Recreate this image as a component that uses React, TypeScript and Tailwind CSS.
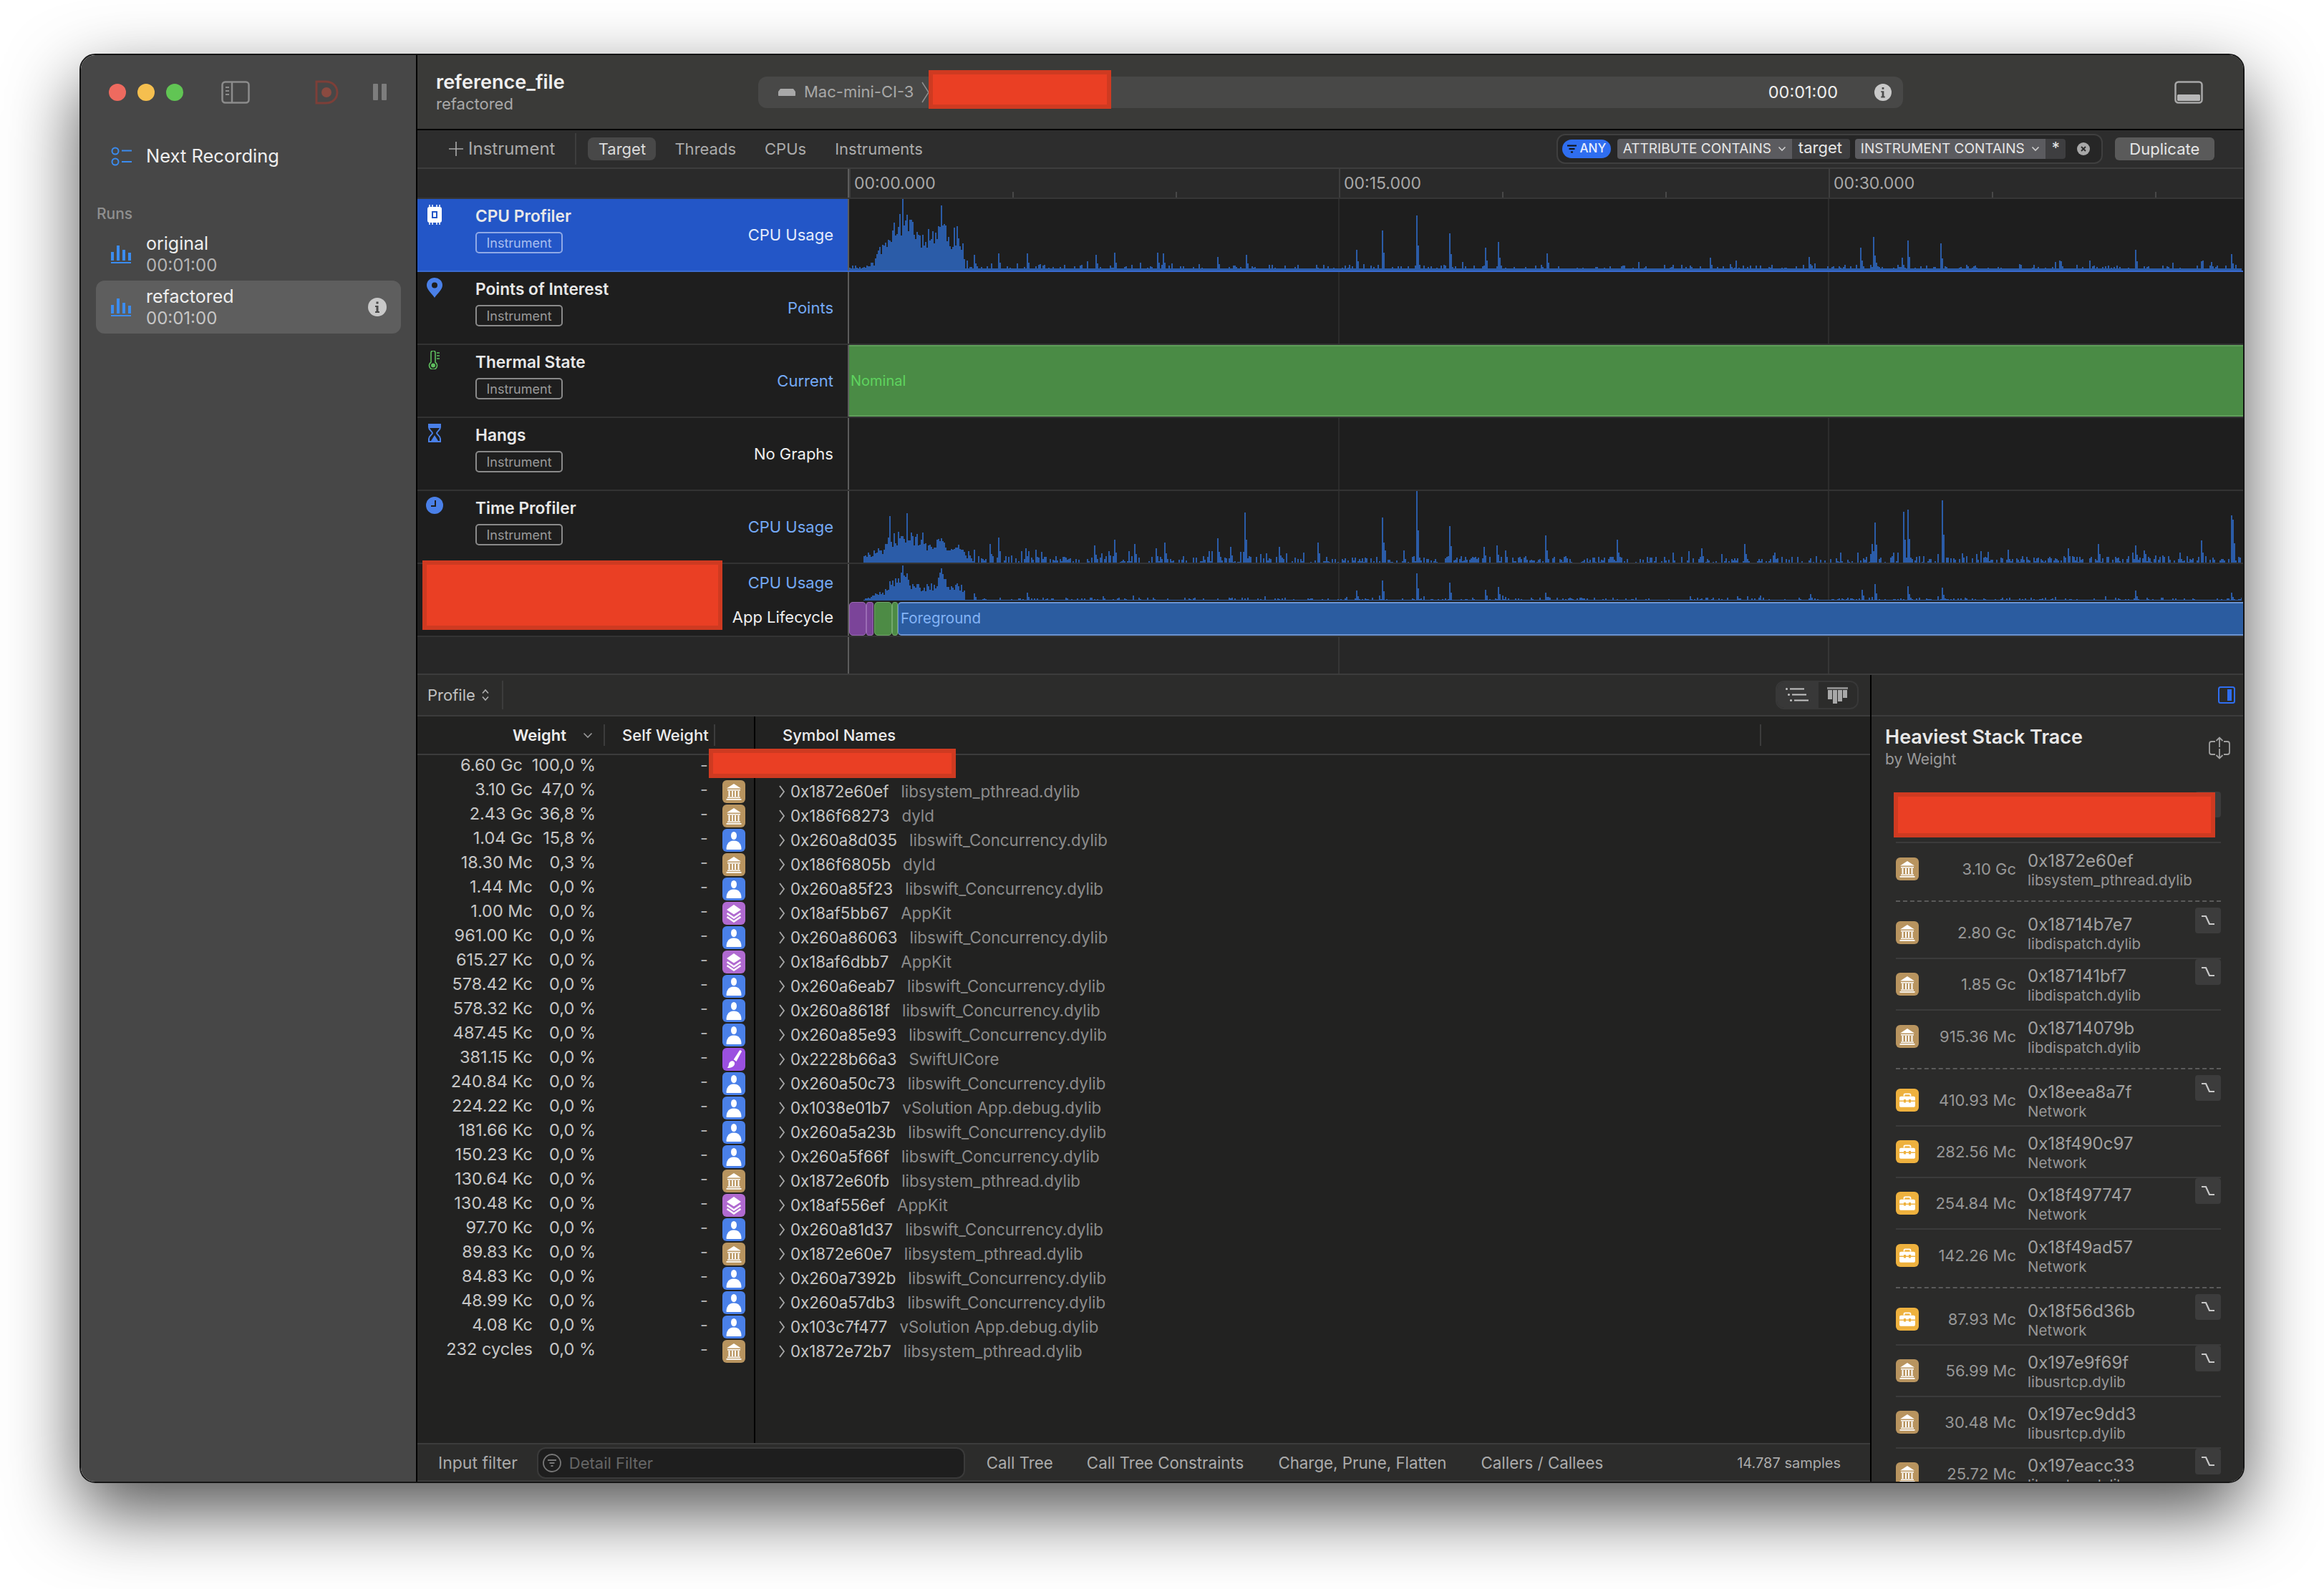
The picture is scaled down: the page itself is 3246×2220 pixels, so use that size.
import React from 'react';

type SymbolKind = 'lib' | 'user' | 'layers' | 'brush' | 'tool';

const CALL_ROWS: [string, string, SymbolKind | null, string, string][] = [
  ['6.60 Gc', '100,0 %', null, '', ''],
  ['3.10 Gc', '47,0 %', 'lib', '0x1872e60ef', 'libsystem_pthread.dylib'],
  ['2.43 Gc', '36,8 %', 'lib', '0x186f68273', 'dyld'],
  ['1.04 Gc', '15,8 %', 'user', '0x260a8d035', 'libswift_Concurrency.dylib'],
  ['18.30 Mc', '0,3 %', 'lib', '0x186f6805b', 'dyld'],
  ['1.44 Mc', '0,0 %', 'user', '0x260a85f23', 'libswift_Concurrency.dylib'],
  ['1.00 Mc', '0,0 %', 'layers', '0x18af5bb67', 'AppKit'],
  ['961.00 Kc', '0,0 %', 'user', '0x260a86063', 'libswift_Concurrency.dylib'],
  ['615.27 Kc', '0,0 %', 'layers', '0x18af6dbb7', 'AppKit'],
  ['578.42 Kc', '0,0 %', 'user', '0x260a6eab7', 'libswift_Concurrency.dylib'],
  ['578.32 Kc', '0,0 %', 'user', '0x260a8618f', 'libswift_Concurrency.dylib'],
  ['487.45 Kc', '0,0 %', 'user', '0x260a85e93', 'libswift_Concurrency.dylib'],
  ['381.15 Kc', '0,0 %', 'brush', '0x2228b66a3', 'SwiftUICore'],
  ['240.84 Kc', '0,0 %', 'user', '0x260a50c73', 'libswift_Concurrency.dylib'],
  ['224.22 Kc', '0,0 %', 'user', '0x1038e01b7', 'vSolution App.debug.dylib'],
  ['181.66 Kc', '0,0 %', 'user', '0x260a5a23b', 'libswift_Concurrency.dylib'],
  ['150.23 Kc', '0,0 %', 'user', '0x260a5f66f', 'libswift_Concurrency.dylib'],
  ['130.64 Kc', '0,0 %', 'lib', '0x1872e60fb', 'libsystem_pthread.dylib'],
  ['130.48 Kc', '0,0 %', 'layers', '0x18af556ef', 'AppKit'],
  ['97.70 Kc', '0,0 %', 'user', '0x260a81d37', 'libswift_Concurrency.dylib'],
  ['89.83 Kc', '0,0 %', 'lib', '0x1872e60e7', 'libsystem_pthread.dylib'],
  ['84.83 Kc', '0,0 %', 'user', '0x260a7392b', 'libswift_Concurrency.dylib'],
  ['48.99 Kc', '0,0 %', 'user', '0x260a57db3', 'libswift_Concurrency.dylib'],
  ['4.08 Kc', '0,0 %', 'user', '0x103c7f477', 'vSolution App.debug.dylib'],
  ['232 cycles', '0,0 %', 'lib', '0x1872e72b7', 'libsystem_pthread.dylib'],
];

type StackRow = { kind: SymbolKind; value: string; sym: string; lib: string; jump?: boolean };

// dashed line between groups
const STACK_GROUPS: StackRow[][] = [
  [{ kind: 'lib', value: '3.10 Gc', sym: '0x1872e60ef', lib: 'libsystem_pthread.dylib' }],
  [
    { kind: 'lib', value: '2.80 Gc', sym: '0x18714b7e7', lib: 'libdispatch.dylib', jump: true },
    { kind: 'lib', value: '1.85 Gc', sym: '0x187141bf7', lib: 'libdispatch.dylib', jump: true },
    { kind: 'lib', value: '915.36 Mc', sym: '0x18714079b', lib: 'libdispatch.dylib' },
  ],
  [
    { kind: 'tool', value: '410.93 Mc', sym: '0x18eea8a7f', lib: 'Network', jump: true },
    { kind: 'tool', value: '282.56 Mc', sym: '0x18f490c97', lib: 'Network' },
    { kind: 'tool', value: '254.84 Mc', sym: '0x18f497747', lib: 'Network', jump: true },
    { kind: 'tool', value: '142.26 Mc', sym: '0x18f49ad57', lib: 'Network' },
  ],
  [
    { kind: 'tool', value: '87.93 Mc', sym: '0x18f56d36b', lib: 'Network', jump: true },
    { kind: 'lib', value: '56.99 Mc', sym: '0x197e9f69f', lib: 'libusrtcp.dylib', jump: true },
    { kind: 'lib', value: '30.48 Mc', sym: '0x197ec9dd3', lib: 'libusrtcp.dylib' },
    { kind: 'lib', value: '25.72 Mc', sym: '0x197eacc33', lib: 'libusrtcp.dylib', jump: true },
  ],
];

type Pt = [number, number];

function rng(seed: number) {
  let s = seed;
  return () => {
    s = (s * 1664525 + 1013904223) % 4294967296;
    return s / 4294967296;
  };
}

function envelope(env: Pt[], x: number) {
  if (env.length === 0 || x < env[0][0] || x > env[env.length - 1][0]) return 0;
  for (let i = 1; i < env.length; i++) {
    if (x <= env[i][0]) {
      const t = (x - env[i - 1][0]) / (env[i][0] - env[i - 1][0]);
      return env[i - 1][1] + (env[i][1] - env[i - 1][1]) * t;
    }
  }
  return 0;
}

function barsPath(opts: { seed: number; start: number; base: number; p1: number; a1: number; p2: number; a2: number; env: Pt[]; spikes: Pt[]; height: number }) {
  const r = rng(opts.seed);
  const hs = new Map<number, number>();
  for (let x = opts.start; x < 3133; x += 2) {
    let h = opts.base;
    const v = r();
    if (v < opts.p2) h += r() * opts.a2;
    else if (v < opts.p1) h += r() * opts.a1;
    const e = envelope(opts.env, x);
    if (e > 0) h = Math.max(h, e * (0.5 + 0.5 * r()));
    hs.set(x, h);
  }
  for (const [x, h] of opts.spikes) {
    const k = x - ((x - opts.start) % 2);
    hs.set(k, h);
    hs.set(k + 2, Math.max(hs.get(k + 2) ?? 0, h * 0.45));
  }
  let d = '';
  hs.forEach((h, x) => {
    if (h >= 1) d += `M${x} ${opts.height}v${-Math.round(h)}h2v${Math.round(h)}z`;
  });
  return d;
}

const CPU_PROFILER_BARS = barsPath({
  seed: 11, start: 1188, base: 3, p1: 0.32, a1: 5, p2: 0.05, a2: 11, height: 100,
  env: [[1204, 4], [1222, 14], [1236, 50], [1246, 70], [1262, 100], [1272, 75], [1288, 58], [1304, 62], [1316, 91], [1328, 52], [1340, 70], [1348, 30], [1350, 4]],
  spikes: [[1262, 100], [1316, 91], [1363, 22], [1396, 24], [1437, 24], [1532, 22], [1559, 25], [1618, 25], [1626, 24], [1702, 19], [1742, 22], [1896, 29], [1933, 56], [1981, 77], [2026, 52], [2076, 32], [2095, 40], [2162, 24], [2391, 18], [2529, 19], [2601, 32], [2619, 47], [2667, 42], [2659, 18], [2713, 38], [2985, 29], [3076, 13], [3118, 23]],
});

const TIME_PROFILER_BARS = barsPath({
  seed: 29, start: 1208, base: 0, p1: 0.62, a1: 9, p2: 0.1, a2: 18, height: 100,
  env: [[1207, 10], [1214, 14], [1236, 25], [1245, 42], [1268, 50], [1285, 34], [1300, 30], [1316, 36], [1325, 20], [1340, 26], [1350, 16], [1351, 0]],
  spikes: [[1245, 65], [1268, 69], [1275, 42], [1283, 40], [1291, 42], [1397, 35], [1385, 26], [1434, 20], [1449, 18], [1530, 24], [1559, 32], [1586, 26], [1628, 28], [1617, 20], [1702, 34], [1721, 22], [1741, 70], [1788, 22], [1843, 28], [1933, 63], [1981, 100], [2027, 51], [2075, 22], [2092, 24], [2161, 38], [2260, 32], [2378, 20], [2438, 26], [2620, 56], [2617, 26], [2660, 71], [2667, 74], [2714, 87], [2891, 20], [2932, 26], [2985, 24], [3076, 31], [3119, 66], [3121, 60]],
});

const APP_BARS = barsPath({
  seed: 53, start: 1208, base: 1, p1: 0.35, a1: 3, p2: 0.05, a2: 6, height: 51,
  env: [[1207, 2], [1220, 8], [1236, 16], [1245, 32], [1262, 49], [1275, 28], [1290, 24], [1305, 26], [1316, 45], [1328, 20], [1340, 28], [1349, 16], [1350, 0]],
  spikes: [[1262, 49], [1316, 45], [1362, 10], [1437, 11], [1896, 14], [1933, 28], [1981, 38], [2027, 25], [2076, 15], [2095, 19], [2161, 11], [2530, 9], [2603, 15], [2620, 23], [2667, 20], [2714, 18], [2985, 14], [3119, 11]],
});

function LaneGraph({ d, height = 100, tall = false }: { d?: string; height?: number; tall?: boolean }) {
  return (
    <svg className="block" width="1945" height={height} viewBox={`1188 0 1945 ${height}`} shapeRendering="crispEdges">
      <path d={`M1871 0h2v${height}h-2zM2555 0h2v${height}h-2z`} fill={tall ? '#363636' : '#2c2c2c'} />
      {d && <path d={d} fill="#2b5ca8" />}
    </svg>
  );
}

function SymbolIcon({ kind }: { kind: SymbolKind }) {
  const fill = { lib: '#b8945f', user: '#4a80e8', layers: '#b06ad0', brush: '#9b50e0', tool: '#eeb13e' }[kind];
  return (
    <svg width="32" height="32" viewBox="0 0 32 32" className="shrink-0">
      <rect width="32" height="32" rx="6" fill={fill} />
      {kind === 'lib' && (
        <g fill="#fff">
          <path d="M16 5l10 6.500H6z" />
          <path d="M7 13h18v1.500H7zM8.500 15h2v8h-2zM13 15h2v8h-2zM17 15h2v8h-2zM21.500 15h2v8h-2zM7 23.500h18V25H7zM5.500 26h21v1.800h-21z" />
        </g>
      )}
      {kind === 'user' && (
        <g fill="#fff">
          <ellipse cx="16" cy="9.500" rx="4" ry="5.500" />
          <path d="M5.500 28c0-7 4-11.500 10.500-11.500S26.500 21 26.500 28c0 .6-.4 1-1 1h-19c-.6 0-1-.4-1-1z" />
        </g>
      )}
      {kind === 'layers' && (
        <g fill="none" stroke="#fff" strokeWidth="2.400">
          <path d="M16 4l10 7-10 6.500L6 11z" fill="#fff" stroke="none" />
          <path d="M6.500 16l9.500 6.500L25.500 16M6.500 21l9.500 6.500L25.500 21" />
        </g>
      )}
      {kind === 'brush' && (
        <g fill="#fff">
          <path d="M24 3.500c1-.8 3 .4 2.800 1.800L19.500 19l-3.800-2.800z" />
          <path d="M12.500 18.500c3-1 5.500 1.500 4.500 4.500-1 3.500-6 6-10.500 4.500 2.500-1 2-3 2.500-5 .4-2 1.800-3.500 3.500-4z" />
        </g>
      )}
      {kind === 'tool' && (
        <g>
          <path d="M11.500 10.500V8.800c0-.9.6-1.500 1.500-1.500h6c.9 0 1.500.6 1.500 1.500v1.700" fill="none" stroke="#fff" strokeWidth="1.800" />
          <path d="M5 13c0-1.400 1-2.300 2.300-2.300h17.400c1.300 0 2.300.9 2.300 2.300v3.500H21v-1.500h-3v1.500h-4v-1.500h-3v1.500H5zM5 18h6v1.500h3V18h4v1.500h3V18h6v5.500c0 1.400-1 2.300-2.300 2.300H7.300C6 25.800 5 24.900 5 23.500z" fill="#fff" />
        </g>
      )}
    </svg>
  );
}

function Chevron() {
  return (
    <svg width="10" height="20" viewBox="0 0 10 20" className="shrink-0">
      <path d="M2 2l6 8-6 8" fill="none" stroke="#a8a8a8" strokeWidth="1.800" />
    </svg>
  );
}

function JumpIcon() {
  return (
    <svg width="20" height="16" viewBox="0 0 20 16">
      <path d="M1 2h6l5 11h7" fill="none" stroke="#c8c8c8" strokeWidth="2.200" />
    </svg>
  );
}

function InfoDot({ size = 26, color = '#c9c9c9' }: { size?: number; color?: string }) {
  return (
    <svg width={size} height={size} viewBox="0 0 26 26" className="shrink-0">
      <circle cx="13" cy="13" r="13" fill={color} />
      <path d="M11.500 5.500h3v3h-3zM10 11h4.500v8H16v2h-6v-2h1.500v-6H10z" fill="#4a4a4a" />
    </svg>
  );
}

function RunBars() {
  return (
    <svg width="28" height="25" viewBox="0 0 28 25" className="shrink-0">
      <path d="M0 9h4v12H0zM8 0h4v21H8zM16 6h4v15h-4zM24 10h4v11h-4zM0 23h28v2H0z" fill="#3b8cf0" />
    </svg>
  );
}

function RedactBox({ className }: { className: string }) {
  return <div className={`absolute z-10 border-[6px] border-[#cf3a21] bg-[#ea3f24] ${className}`} />;
}

function TrackIcon({ name }: { name: string }) {
  if (name === 'cpu') {
    return (
      <svg width="22" height="28" viewBox="0 0 22 28">
        <rect x="1" y="3" width="20" height="22" rx="3" fill="#fff" />
        <path d="M4 0v3M8 0v3M14 0v3M18 0v3M4 25v3M8 25v3M14 25v3M18 25v3" stroke="#fff" strokeWidth="1.500" />
        <rect x="7" y="9" width="8" height="10" fill="#2356c7" />
        <rect x="9" y="11" width="4" height="6" fill="#fff" />
      </svg>
    );
  }
  if (name === 'pin') {
    return (
      <svg width="22" height="28" viewBox="0 0 22 28">
        <path d="M11 28C8 23 0 17 0 10.500a11 10.500 0 0 1 22 0C22 17 14 23 11 28z" fill="#4a80e8" />
        <circle cx="11" cy="10.500" r="4" fill="#1e1e1e" />
      </svg>
    );
  }
  if (name === 'therm') {
    return (
      <svg width="18" height="26" viewBox="0 0 18 26">
        <path d="M4 3a3 3 0 0 1 6 0v13a5.500 5.500 0 1 1-6 0z" fill="none" stroke="#5fc05f" strokeWidth="1.600" />
        <circle cx="7" cy="20.500" r="3" fill="#5fc05f" />
        <path d="M12 3h4M12 7h4M12 11h4" stroke="#5fc05f" strokeWidth="1.400" />
      </svg>
    );
  }
  if (name === 'hang') {
    return (
      <svg width="20" height="26" viewBox="0 0 20 26">
        <path d="M2 1h16v4c0 4-5 6-5 8s5 4 5 8v4H2v-4c0-4 5-6 5-8S2 9 2 5z" fill="none" stroke="#4a80e8" strokeWidth="2" />
        <path d="M2 1h16v5H2zM10 16l5 8H5z" fill="#4a80e8" />
      </svg>
    );
  }
  return (
    <svg width="24" height="24" viewBox="0 0 24 24">
      <circle cx="12" cy="12" r="12" fill="#4a80e8" />
      <path d="M13 5v8H7" fill="none" stroke="#1e1e1e" strokeWidth="2" />
    </svg>
  );
}

function Track({ icon, title, label, selected, labelWhite, d, bar }: { icon: string; title: string; label: string; selected?: boolean; labelWhite?: boolean; d?: string; bar?: boolean }) {
  return (
    <div className={`flex h-[102px] border-b-2 ${selected ? 'border-[#3a6ad0]' : 'border-[#333333]'}`}>
      <div className={`flex w-[603px] shrink-0 border-r-2 border-[#5c5c5c] ${selected ? 'bg-[#2356c7]' : 'bg-[#1e1e1e]'}`}>
        <div className="flex w-[46px] shrink-0 justify-center pl-[2px] pt-[8px]">
          <TrackIcon name={icon} />
        </div>
        <div className="ml-[35px] flex flex-col items-start pt-[10px]">
          <div className="text-[22.700px] leading-[28px] font-semibold text-[#e8e8e8]">{title}</div>
          <div className={`mt-[8px] flex h-[30px] w-[122px] items-center justify-center rounded-[5px] border-2 text-[18px] ${selected ? 'border-[#8fa9e6] text-[#a9bfef]' : 'border-[#8a8a8a] text-[#9a9a9a]'}`}>
            Instrument
          </div>
        </div>
        <div className={`ml-auto self-center pr-[20px] text-[22px] ${selected ? 'text-[#e4ecfb]' : labelWhite ? 'text-[#eeeeee]' : 'text-[#74a9f5]'}`}>{label}</div>
      </div>
      <div className="min-w-0 flex-1 bg-[#1e1e1e]">
        {bar ? (
          <div className="h-full border-y-2 border-[#5f9f5a] bg-[#4a8b45] pl-[2px] text-[20px] leading-[96px] text-[#5fd45f]">Nominal</div>
        ) : (
          <LaneGraph d={d} />
        )}
      </div>
    </div>
  );
}

function RulerCell({ label }: { label?: string }) {
  if (label) {
    return (
      <div className="h-full w-[228px] shrink-0 border-l-2 border-[#3e3e3e] pl-[5px] text-[23px] leading-[40px] text-[#a8a8a8]">{label}</div>
    );
  }
  return (
    <div className="flex h-full w-[228px] shrink-0 items-end">
      <div className="h-[8px] w-[2px] bg-[#484848]" />
    </div>
  );
}

function Token({ text, value, w, vw }: { text: string; value: string; w: string; vw: string }) {
  return (
    <div className="flex h-[28px] overflow-hidden rounded-[4px]">
      <div className={`flex items-center justify-between whitespace-nowrap bg-[#5b5b5f] px-[8px] text-[19px] text-[#e6e6e6] ${w}`}>
        {text}
        <svg width="12" height="8" viewBox="0 0 12 8"><path d="M1.500 1.500L6 6l4.500-4.500" fill="none" stroke="#d0d0d0" strokeWidth="1.600" /></svg>
      </div>
      <div className={`bg-[#3e3e40] pl-[9px] text-[22px] leading-[25px] text-[#e6e6e6] ${vw}`}>{value}</div>
    </div>
  );
}

function StackItem({ row, last }: { row: StackRow; last: boolean }) {
  return (
    <div className={`relative flex h-[72px] items-center ${last ? 'pb-0' : 'border-b-2 border-[#3b3b3b]'}`}>
      <SymbolIcon kind={row.kind} />
      <div className="w-[136px] shrink-0 text-right text-[22px] text-[#979797]">{row.value}</div>
      <div className="ml-[16px] min-w-0 pt-[3px]">
        <div className="text-[24px] leading-[28px] text-[#a0a0a0]">{row.sym}</div>
        <div className="text-[20.500px] leading-[26px] text-[#979797]">{row.lib}</div>
      </div>
      {row.jump && (
        <div className="absolute top-0 right-0 flex h-[36px] w-[36px] items-center justify-center rounded-[4px] bg-[#3c3c3c]">
          <JumpIcon />
        </div>
      )}
    </div>
  );
}

export default function App() {
  return (
    <div className="h-[2220px] w-[3246px] overflow-hidden bg-white pt-[75px] pl-[111px] font-['Inter',sans-serif]">
      <div className="flex h-[1997px] w-[3024px] overflow-hidden rounded-[22px] border-2 border-[#161616] shadow-[0_40px_100px_rgba(0,0,0,0.68)]">
        {/* Sidebar */}
        <div className="w-[470px] shrink-0 border-r-2 border-black bg-[#474747]">
          <div className="flex h-[103px] items-center pl-[39px]">
            <div className="h-[24px] w-[24px] rounded-full bg-[#ee6a5f]" />
            <div className="ml-[16px] h-[24px] w-[24px] rounded-full bg-[#f5bf4f]" />
            <div className="ml-[16px] h-[24px] w-[24px] rounded-full bg-[#61c554]" />
            <svg className="ml-[53px]" width="40" height="32" viewBox="0 0 40 32">
              <rect x="1.500" y="1.500" width="37" height="29" rx="4" fill="none" stroke="#8c8c8c" strokeWidth="2.500" />
              <path d="M15 2v28" stroke="#8c8c8c" strokeWidth="2.500" />
              <path d="M6 9h5M6 14h5M6 19h5" stroke="#8c8c8c" strokeWidth="1.800" />
            </svg>
            <svg className="ml-[91px]" width="34" height="34" viewBox="0 0 34 34">
              <path d="M2 2h13c9 0 16 6 16 15s-7 15-16 15H2z" fill="none" stroke="#7d3f38" strokeWidth="3" />
              <circle cx="16" cy="17" r="7" fill="#8a4a40" />
            </svg>
            <div className="ml-[47px] flex gap-[5px]">
              <div className="h-[23px] w-[7px] rounded-[1px] bg-[#7d7d7d]" />
              <div className="h-[23px] w-[7px] rounded-[1px] bg-[#7d7d7d]" />
            </div>
          </div>
          <div className="mt-[20px] flex h-[36px] items-center pl-[42px]">
            <svg width="30" height="27" viewBox="0 0 30 27" className="shrink-0">
              <g fill="none" stroke="#3b8cf0" strokeWidth="2">
                <circle cx="6" cy="6" r="4.500" />
                <circle cx="6" cy="21" r="4.500" />
                <path d="M15 5.500h14M15 21h14" />
              </g>
            </svg>
            <span className="ml-[19px] text-[25.500px] text-[#eeeeee]">Next Recording</span>
          </div>
          <div className="mt-[49px] pl-[22px] text-[21px] leading-[28px] font-medium text-[#8f8f8f]">Runs</div>
          <div className="mt-[5px] flex h-[74px] items-center rounded-[12px] pl-[42px]">
            <RunBars />
            <div className="ml-[21px]">
              <div className="text-[25px] leading-[31px] text-[#eeeeee]">original</div>
              <div className="text-[24px] leading-[29px] text-[#b5b5b5]">00:01:00</div>
            </div>
          </div>
          <div className="mx-[21px] flex h-[74px] items-center rounded-[12px] bg-[#5e5e5e] pl-[21px]">
            <RunBars />
            <div className="ml-[21px]">
              <div className="text-[25px] leading-[31px] text-[#eeeeee]">refactored</div>
              <div className="text-[24px] leading-[29px] text-[#c6c6c6]">00:01:00</div>
            </div>
            <div className="mr-[20px] ml-auto">
              <InfoDot />
            </div>
          </div>
        </div>

        {/* Main */}
        <div className="relative flex min-w-0 flex-1 flex-col bg-[#2c2c2b]">
          <RedactBox className="top-[21px] left-[714px] h-[54px] w-[255px]" />
          <RedactBox className="top-[706px] left-[7px] h-[97px] w-[419px]" />

          <div className="flex h-[105px] shrink-0 items-center border-b-2 border-black bg-[#3a3a38] pl-[26px]">
            <div className="w-[450px] shrink-0 pb-[2px]">
              <div className="text-[27px] leading-[34px] font-semibold text-[#f0f0f0]">reference_file</div>
              <div className="text-[22px] leading-[26px] text-[#a8a8a8]">refactored</div>
            </div>
            <div className="flex h-[44px] w-[1599px] items-center rounded-[12px] bg-[#484847] pl-[28px]">
              <svg width="24" height="10" viewBox="0 0 24 10" className="shrink-0">
                <path d="M3 0h18l3 4v5c0 .6-.4 1-1 1H1c-.6 0-1-.4-1-1V4z" fill="#a8a8a8" />
              </svg>
              <span className="ml-[12px] text-[22px] text-[#a8a8a8]">Mac-mini-CI-3</span>
              <svg className="ml-[11px]" width="12" height="30" viewBox="0 0 12 30">
                <path d="M1 1l9 14-9 14" fill="none" stroke="#8f8f8f" strokeWidth="1.500" />
              </svg>
              <span className="ml-auto text-[23.500px] text-[#eeeeee]">00:01:00</span>
              <div className="mr-[16px] ml-[51px]">
                <InfoDot size={24} />
              </div>
            </div>
            <svg className="ml-auto mr-[56px]" width="40" height="32" viewBox="0 0 40 32">
              <rect x="1.500" y="1.500" width="37" height="29" rx="4" fill="none" stroke="#a8a8a8" strokeWidth="2.500" />
              <rect x="4" y="19" width="32" height="9" rx="1.500" fill="#b8b8b8" />
            </svg>
          </div>

          {/* Toolbar */}
          <div className="flex h-[54px] shrink-0 items-center border-b-2 border-[#3d3d3d] bg-[#2d2d2d] text-[22px] text-[#ababab]">
            <div className="ml-[44px] flex items-center">
              <svg width="20" height="20" viewBox="0 0 20 20"><path d="M10 0v20M0 10h20" stroke="#ababab" strokeWidth="1.600" /></svg>
              <span className="ml-[7px] text-[24px]">Instrument</span>
            </div>
            <div className="ml-[28px] h-[44px] w-[2px] bg-[#3d3d3d]" />
            <div className="ml-[16px] flex h-[32px] w-[95px] items-center justify-center rounded-[8px] bg-[#484848] text-[#dcdcdc]">Target</div>
            <span className="ml-[26px]">Threads</span>
            <span className="ml-[40px]">CPUs</span>
            <span className="ml-[40px]">Instruments</span>
            <div className="ml-[885px] flex h-[42px] w-[763px] items-center rounded-[12px] border-2 border-[#3f3f3f] bg-[#262626] pl-[6px]">
              <div className="flex h-[26px] w-[68px] items-center justify-center gap-[3px] rounded-full bg-[#2f6ef0] text-[17px] font-medium text-[#e8eefc]">
                <svg width="15" height="12" viewBox="0 0 15 12"><path d="M1 1.500h13M3.500 6h8M6 10.500h3" stroke="#101010" strokeWidth="2" /></svg>
                ANY
              </div>
              <div className="ml-[9px] flex gap-[7px]">
                <Token text="ATTRIBUTE CONTAINS" value="target" w="w-[244px]" vw="w-[81px]" />
                <Token text="INSTRUMENT CONTAINS" value="*" w="w-[266px]" vw="w-[28px]" />
              </div>
              <svg className="ml-[16px]" width="18" height="18" viewBox="0 0 18 18">
                <circle cx="9" cy="9" r="9" fill="#a8a8a8" />
                <path d="M6 6l6 6M12 6l-6 6" stroke="#2a2a2a" strokeWidth="1.800" />
              </svg>
            </div>
            <div className="ml-[17px] flex h-[32px] w-[139px] items-center justify-center rounded-[6px] bg-[#5a5a5a] text-[#e6e6e6]">Duplicate</div>
          </div>

          {/* Ruler */}
          <div className="flex h-[42px] shrink-0 border-b-2 border-[#363636] bg-[#2a2a2a]">
            <div className="w-[603px] shrink-0 border-r-2 border-[#5c5c5c]" />
            <div className="flex min-w-0 flex-1 overflow-hidden">
              <RulerCell label="00:00.000" />
              <RulerCell />
              <RulerCell />
              <RulerCell label="00:15.000" />
              <RulerCell />
              <RulerCell />
              <RulerCell label="00:30.000" />
              <RulerCell />
              <RulerCell />
            </div>
          </div>

          {/* Tracks */}
          <Track icon="cpu" title="CPU Profiler" label="CPU Usage" selected d={CPU_PROFILER_BARS} />
          <Track icon="pin" title="Points of Interest" label="Points" />
          <Track icon="therm" title="Thermal State" label="Current" bar />
          <Track icon="hang" title="Hangs" label="No Graphs" labelWhite />
          <Track icon="clock" title="Time Profiler" label="CPU Usage" d={TIME_PROFILER_BARS} />
          <div className="flex h-[102px] border-b-2 border-[#333333]">
            <div className="flex w-[603px] shrink-0 flex-col items-end justify-center gap-[20px] border-r-2 border-[#5c5c5c] bg-[#1e1e1e] pr-[20px] text-[22px] leading-[28px]">
              <div className="text-[#74a9f5]">CPU Usage</div>
              <div className="text-[#eeeeee]">App Lifecycle</div>
            </div>
            <div className="min-w-0 flex-1 bg-[#1e1e1e]">
              <LaneGraph d={APP_BARS} height={51} />
              <div className="mt-[2px] flex h-[47px]">
                <div className="w-[24px] rounded-[5px] border border-[#9b6cb5] bg-[#7b4499]" />
                <div className="w-[10px] rounded-[3px] border border-[#9b6cb5] bg-[#7b4499]" />
                <div className="ml-[1px] w-[25px] rounded-[5px] border border-[#73a86c] bg-[#4d8b45]" />
                <div className="w-[8px] rounded-[3px] border border-[#73a86c] bg-[#4d8b45]" />
                <div className="flex-1 rounded-l-[5px] border-y-2 border-l border-[#6a92d0] bg-[#2b5ca0] pl-[3px] text-[20.500px] leading-[42px] text-[#84b4f7]">Foreground</div>
              </div>
            </div>
          </div>
          <div className="flex h-[53px] shrink-0 border-b-2 border-[#3c3c3c] bg-[#272727]">
            <div className="w-[603px] shrink-0 border-r-2 border-[#5c5c5c]" />
            <LaneGraph height={51} tall />
          </div>

          {/* Lower split */}
          <div className="flex min-h-0 flex-1">
            <div className="relative flex w-[2031px] shrink-0 flex-col border-r-2 border-black">
              <RedactBox className="top-[103px] left-[407px] h-[41px] w-[345px]" />
              <div className="flex h-[58px] shrink-0 items-center border-b-2 border-[#3c3c3c] bg-[#2c2c2b]">
                <span className="ml-[14px] text-[22px] text-[#c0c0c0]">Profile</span>
                <svg className="ml-[8px]" width="12" height="18" viewBox="0 0 12 18">
                  <path d="M2 6.500L6 2l4 4.500M2 11.500L6 16l4-4.500" fill="none" stroke="#b0b0b0" strokeWidth="1.600" />
                </svg>
                <div className="ml-[17px] h-[40px] w-[2px] bg-[#3c3c3c]" />
                <div className="mr-[16px] ml-auto flex h-[40px] w-[116px] overflow-hidden rounded-[12px] border-2 border-[#383838]">
                  <div className="flex w-[58px] items-center justify-center bg-[#383838]">
                    <svg width="34" height="24" viewBox="0 0 34 24">
                      <path d="M6 3.500h20M9 11.500h20M12 19.500h20" stroke="#c4c4c4" strokeWidth="2.200" />
                      <circle cx="1.500" cy="3.500" r="1.500" fill="#c4c4c4" />
                      <circle cx="4.500" cy="11.500" r="1.500" fill="#c4c4c4" />
                      <circle cx="7.500" cy="19.500" r="1.500" fill="#c4c4c4" />
                    </svg>
                  </div>
                  <div className="flex flex-1 items-center justify-center">
                    <svg width="30" height="24" viewBox="0 0 30 24">
                      <path d="M0 1h29v3H0z" fill="#8a8a8a" />
                      <path d="M1 5h6v13H1zM8 5h6v19H8zM15 5h6v16h-6zM22 5h6v11h-6z" fill="#a8a8a8" />
                    </svg>
                  </div>
                </div>
              </div>
              <div className="flex h-[54px] shrink-0 border-b-2 border-[#3c3c3c] bg-[#222221] text-[22px]">
                <div className="flex w-[472px] shrink-0 items-center border-r-2 border-black">
                  <span className="ml-[133px] w-[78px] font-semibold text-[#ececec]">Weight</span>
                  <svg className="ml-[20px]" width="14" height="9" viewBox="0 0 14 9">
                    <path d="M1.500 1.500L7 7l5.500-5.500" fill="none" stroke="#9a9a9a" strokeWidth="1.600" />
                  </svg>
                  <div className="ml-[15px] h-[30px] w-[2px] bg-[#3c3c3c]" />
                  <span className="ml-[24px] font-medium text-[#ececec]">Self Weight</span>
                  <div className="ml-auto mr-[54px] h-[30px] w-[2px] bg-[#3c3c3c]" />
                </div>
                <div className="flex flex-1 items-center">
                  <span className="ml-[38px] font-medium text-[#ececec]">Symbol Names</span>
                  <div className="ml-auto mr-[152px] h-[30px] w-[2px] bg-[#3c3c3c]" />
                </div>
              </div>
              <div className="flex min-h-0 flex-1 flex-col bg-[#222221]">
                {CALL_ROWS.map(([w, pct, kind, sym, lib]) => (
                  <div key={w} className="flex h-[34px] shrink-0">
                    <div className="relative flex w-[472px] shrink-0 whitespace-nowrap border-r-2 border-black text-[23.500px] leading-[28px] text-[#c6c6c6]">
                      <span className={`shrink-0 text-right ${pct === '100,0 %' ? 'w-[147px]' : 'w-[161px]'}`}>{w}</span>
                      <span className={`shrink-0 text-right ${pct === '100,0 %' ? 'w-[102px]' : 'w-[88px]'}`}>{pct}</span>
                      <span className="ml-[146px] text-[#b0b0b0]">-</span>
                      <div className="absolute top-px left-[426px]">{kind && <SymbolIcon kind={kind} />}</div>
                    </div>
                    <div className="flex min-w-0 flex-1 items-center pl-[32px] text-[22.300px]">
                      {kind && (
                        <>
                          <Chevron />
                          <span className="ml-[7px] text-[#c6c6c6]">{sym}</span>
                          <span className="ml-[17px] text-[#8c8c8c]">{lib}</span>
                        </>
                      )}
                    </div>
                  </div>
                ))}
                <div className="flex min-h-0 flex-1">
                  <div className="w-[472px] shrink-0 border-r-2 border-black" />
                </div>
              </div>
              <div className="flex h-[54px] shrink-0 items-center border-y-2 border-[#3c3c3c] bg-[#2c2c2b] pt-[2px] text-[22.300px] text-[#ababab]">
                <span className="ml-[29px] text-[23px]">Input filter</span>
                <div className="ml-[27px] flex h-[44px] w-[598px] items-center rounded-[12px] border-2 border-[#3a3a3a] bg-[#1e1e1e] pl-[6px]">
                  <svg width="26" height="26" viewBox="0 0 26 26" className="shrink-0">
                    <circle cx="13" cy="13" r="12" fill="none" stroke="#777777" strokeWidth="1.800" />
                    <path d="M7 9h12M9.500 13h7M11.500 17h3" stroke="#777777" strokeWidth="1.800" />
                  </svg>
                  <span className="ml-[11px] text-[22px] text-[#666666]">Detail Filter</span>
                </div>
                <span className="ml-[30px]">Call Tree</span>
                <span className="ml-[47px]">Call Tree Constraints</span>
                <span className="ml-[48px]">Charge, Prune, Flatten</span>
                <span className="ml-[48px]">Callers / Callees</span>
                <span className="mr-[41px] ml-auto text-[20px]">14.787 samples</span>
              </div>
            </div>

            {/* Heaviest stack */}
            <div className="relative min-w-0 flex-1 overflow-hidden bg-[#2b2b2a]">
              <RedactBox className="top-[164px] left-[31px] h-[63px] w-[449px]" />
              <div className="flex h-[58px] items-center justify-end border-b-2 border-[#3c3c3c] pr-[11px]">
                <svg width="24" height="24" viewBox="0 0 24 24">
                  <rect x="1" y="1" width="22" height="22" rx="2.500" fill="none" stroke="#2f6ef0" strokeWidth="2" />
                  <rect x="13" y="4" width="6" height="16" fill="#2f6ef0" />
                </svg>
              </div>
              <div className="flex h-[105px] items-start pt-[13px] pl-[19px]">
                <div>
                  <div className="text-[27px] leading-[32px] font-semibold text-[#e8e8e8]">Heaviest Stack Trace</div>
                  <div className="text-[21px] leading-[30px] text-[#9a9a9a]">by Weight</div>
                </div>
                <svg className="mt-[15px] mr-[18px] ml-auto" width="30" height="32" viewBox="0 0 30 32">
                  <g fill="none" stroke="#a0a0a0" strokeWidth="1.800">
                    <path d="M9 7H4a3 3 0 0 0-3 3v12a3 3 0 0 0 3 3h5M21 7h5a3 3 0 0 1 3 3v12a3 3 0 0 1-3 3h-5" />
                    <path d="M15 15V2M10.500 6L15 1.500 19.500 6M15 17v13M10.500 26L15 30.500l4.500-4.500" />
                  </g>
                </svg>
              </div>
              <div className="mr-[31px] ml-[34px]">
                {STACK_GROUPS.map((group, gi) => (
                  <div key={gi} className={`${gi === 0 ? 'pb-[8px]' : 'py-[8px]'} ${gi < STACK_GROUPS.length - 1 ? 'border-b-2 border-dashed border-[#5a5a5a]' : ''}`}>
                    {gi === 0 && (
                      <div className="relative h-[72px] border-b-2 border-[#3b3b3b]">
                        <div className="absolute top-0 right-0 h-[36px] w-[36px] rounded-[4px] bg-[#3c3c3c]" />
                      </div>
                    )}
                    {group.map((row, ri) => (
                      <StackItem key={row.sym} row={row} last={ri === group.length - 1 && gi < STACK_GROUPS.length - 1} />
                    ))}
                  </div>
                ))}
              </div>
            </div>
          </div>
        </div>
      </div>
    </div>
  );
}
